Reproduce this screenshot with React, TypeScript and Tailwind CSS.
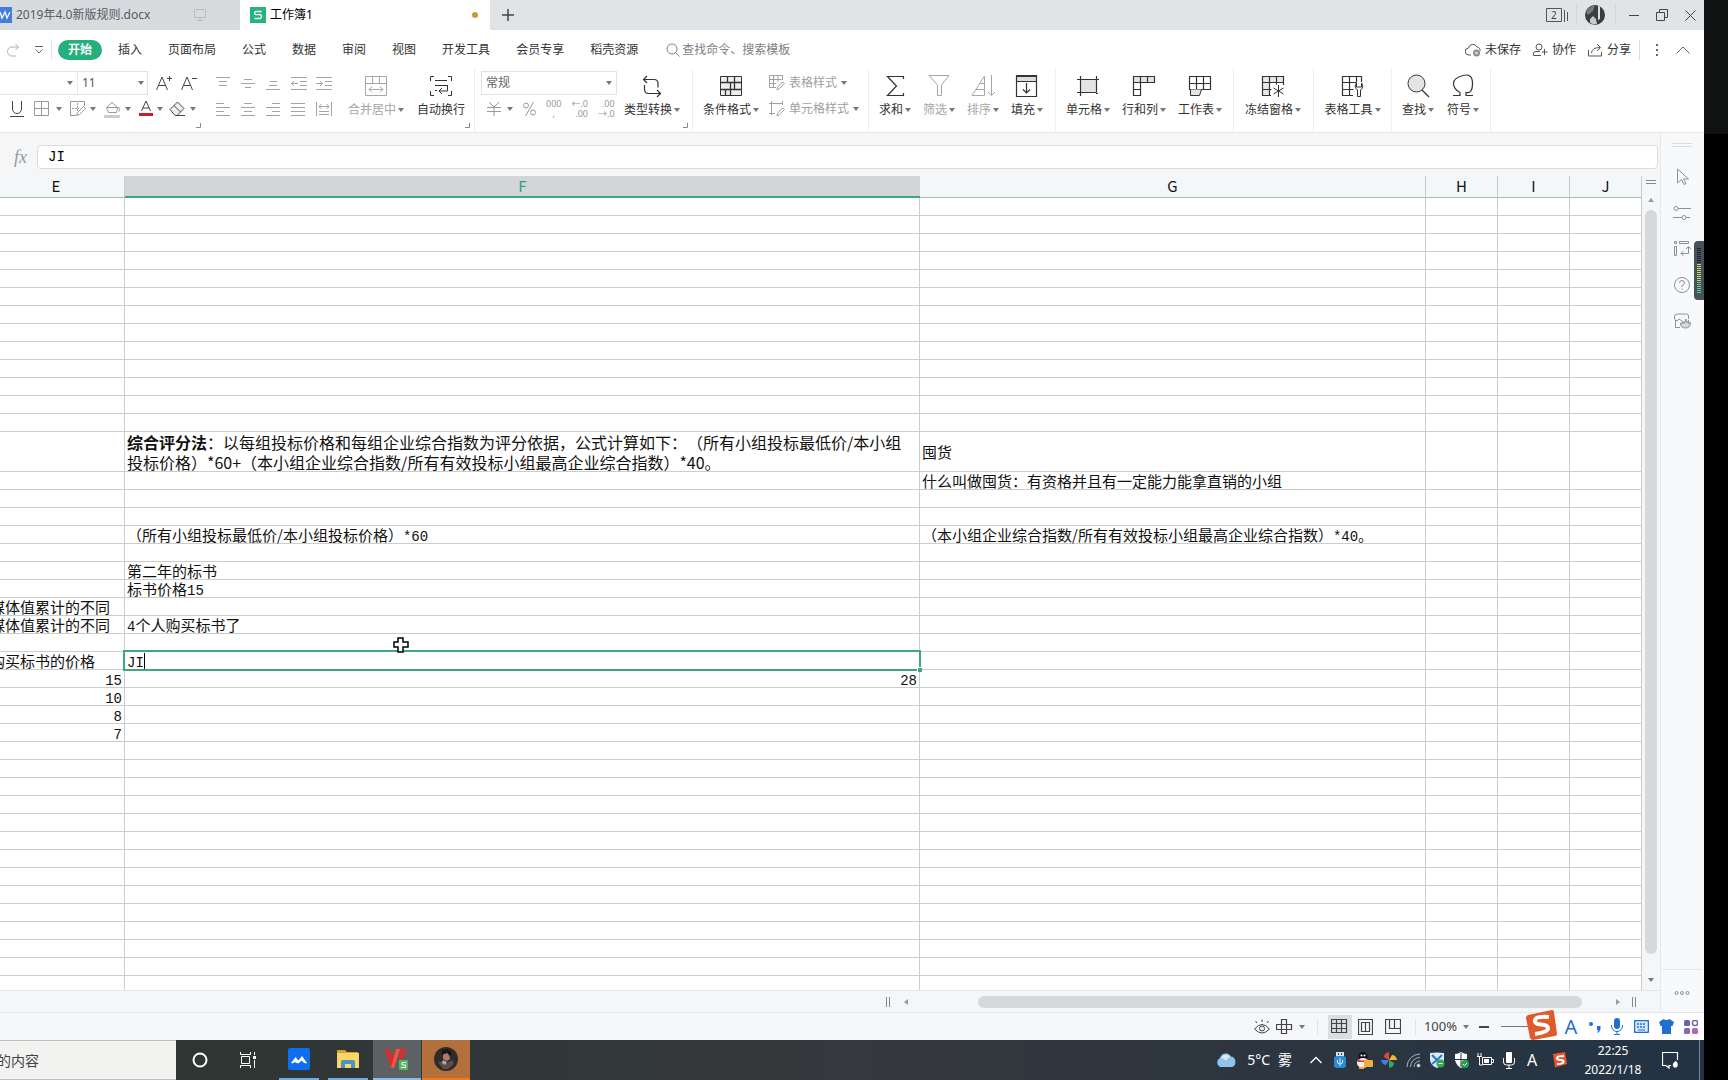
import React from "react";

const UI = "font-['Noto_Sans','Noto_Sans_CJK_SC',sans-serif]";
const CJK = "font-['Noto_Sans_CJK_SC',sans-serif]";
const MONO = "font-['Liberation_Mono','Noto_Sans_CJK_SC',monospace]";

interface IconProps {
    w?: number;
    h?: number;
    className?: string;
    children: React.ReactNode;
}

// Base for all line icons, one unit per pixel
const Icon = ({ w = 20, h = 20, className = "", children }: IconProps) => (
    <svg
        width={w}
        height={h}
        viewBox={`0 0 ${w} ${h}`}
        fill="none"
        stroke="currentColor"
        strokeWidth="1"
        className={`shrink-0 ${className}`}
        aria-hidden="true"
    >
        {children}
    </svg>
);

const Caret = ({ className = "" }: { className?: string }) => (
    <svg width="6" height="4" viewBox="0 0 6 4" className={`shrink-0 fill-[#777] ${className}`} aria-hidden="true">
        <path d="M0 0h6L3 4z" />
    </svg>
);

interface BigButtonProps {
    label: string;
    icon: React.ReactNode;
    width: string;
    caret?: boolean;
    disabled?: boolean;
}

const BigButton = ({ label, icon, width, caret = true, disabled = false }: BigButtonProps) => (
    <button className={`flex flex-col items-center shrink-0 pt-1.5 ${width} ${disabled ? "text-[#a6a6a6]" : "text-[#333]"}`}>
        {icon}
        <span className="flex items-center gap-0.5 text-xs leading-4 mt-1 whitespace-nowrap">
            {label}
            {caret && <Caret />}
        </span>
    </button>
);

const Launcher = () => (
    <Icon w={5} h={5} className="absolute right-1 bottom-1 text-[#888]">
        <path d="M4.500 0v4.500H0" />
    </Icon>
);

const menuItems = ["插入", "页面布局", "公式", "数据", "审阅", "视图", "开发工具", "会员专享", "稻壳资源"];

const TitleBar = () => (
    <div className="flex h-[30px] shrink-0 bg-[#e1e4e7] text-xs text-[#333]">
        <button className="flex items-center w-[240px] bg-[#d9dadd] text-[#555b66]">
            <svg width="12" height="16" viewBox="0 0 12 16" className="shrink-0" aria-hidden="true">
                <path d="M0 0h12v16H0z" fill="#3f7de0" />
                <path d="M0 5l2 6 3-6 2 6 3-6" fill="none" stroke="#fff" strokeWidth="1.300" />
            </svg>
            <span className="ml-1 w-[178px] text-left whitespace-nowrap">2019年4.0新版规则.docx</span>
            <Icon w={12} h={12} className="text-[#bbbdc2]">
                <path d="M.5 .5h11v8H.5zM6 8.500v3M3 11.500h6" />
            </Icon>
        </button>
        <button className="flex items-center w-[250px] bg-white pl-2.5 pr-3 text-black">
            <svg width="16" height="16" viewBox="0 0 16 16" className="shrink-0" aria-hidden="true">
                <path d="M0 0h16v16H0z" fill="#22b57c" />
                <path d="M11.500 4.500H6Q4.500 4.500 4.500 6T6 7.700h4q1.500 0 1.500 1.800T10 11.500H4.500" fill="none" stroke="#fff" strokeWidth="1.300" />
            </svg>
            <span className="ml-1 flex-1 text-left">工作簿1</span>
            <span className="size-1.5 rounded-full bg-[#cb9a3c]" />
        </button>
        <button className="pl-3" aria-label="新建">
            <Icon w={12} h={12} className="text-[#444]">
                <path d="M6 0v12M0 6h12" strokeWidth="1.500" />
            </Icon>
        </button>
        <div className="flex items-center ml-auto pr-0.5">
            <Icon w={22} h={15} className="text-[#555]">
                <path d="M.5 .5h15v13H.5zM18.500 2v12M21.500 4v9" />
                <text x="5" y="11" fontSize="10" fill="#444" stroke="none">2</text>
            </Icon>
            <span className="w-px h-5 bg-[#d2d5d8] mx-2" />
            <svg width="20" height="20" viewBox="0 0 20 20" aria-hidden="true">
                <circle cx="10" cy="10" r="10" fill="#3c3c3f" />
                <path d="M1 7Q4 1 10 .5L8 6l-5 4z" fill="#77787c" />
                <path d="M13 .5v15l2-2V1.500z" fill="#dcdcde" />
                <path d="M5 14l3-3 3 3 1 5-4 .5-3-2z" fill="#c9c9cd" />
            </svg>
            <span className="w-px h-5 bg-[#d2d5d8] ml-2.5 mr-1.5" />
            <button className="flex items-center justify-center w-6 h-5" aria-label="最小化">
                <Icon w={10} h={10} className="text-[#444]"><path d="M0 5.500h10" /></Icon>
            </button>
            <button className="flex items-center justify-center w-8 h-5" aria-label="还原">
                <Icon w={12} h={12} className="text-[#444]"><path d="M.5 3.500h8v8h-8zM3.500 3.500v-3h8v8h-3" /></Icon>
            </button>
            <button className="flex items-center justify-center w-6 h-5" aria-label="关闭">
                <Icon w={11} h={11} className="text-[#444]"><path d="M.5 .5l10 10M10.500 .5l-10 10" /></Icon>
            </button>
        </div>
    </div>
);

const MenuBar = () => (
    <div className="flex items-center h-[38px] shrink-0 bg-white text-xs text-[#333] pt-0.5 pl-1.5 pr-3.5">
        <button aria-label="恢复">
            <Icon w={14} h={14} className="text-[#b0b0b0]">
                <path d="M9.500 1l3 3-3 3M12 4H6a4.500 4.500 0 0 0 0 9h4" />
            </Icon>
        </button>
        <button className="ml-[15px]" aria-label="自定义">
            <Icon w={8} h={8} className="text-[#666]"><path d="M0 .5h8M.5 3.500L4 7l3.500-3.500" /></Icon>
        </button>
        <span className="w-px h-5 bg-[#e4e4e4] ml-2" />
        <button className="ml-1.5 h-5 px-2.5 rounded-full bg-[#24b07c] text-white font-bold">开始</button>
        <nav className="flex gap-[26px] ml-4">
            {menuItems.map((item) => (
                <button key={item} className="whitespace-nowrap">{item}</button>
            ))}
        </nav>
        <label className="flex items-center gap-0.5 ml-7 text-[#7d8088]">
            <Icon w={14} h={14}><circle cx="6" cy="6" r="5" /><path d="M9.500 9.500l4 4" /></Icon>
            <input className="w-[120px] outline-none placeholder:text-[#7d8088]" placeholder="查找命令、搜索模板" aria-label="查找命令" />
        </label>
        <div className="flex items-center ml-auto">
            <button className="flex items-center gap-1">
                <Icon w={16} h={14} className="text-[#555]">
                    <path d="M6 12H4a3.500 3.500 0 0 1-.5-7A4.500 4.500 0 0 1 12 4a3.500 3.500 0 0 1 3 4" />
                    <circle cx="11.500" cy="10" r="3.500" fill="#888" stroke="none" />
                    <path d="M10 8.500l3 3M13 8.500l-3 3" stroke="#fff" />
                </Icon>
                未保存
            </button>
            <button className="flex items-center gap-1 ml-3">
                <Icon w={15} h={14} className="text-[#555]">
                    <circle cx="6" cy="4" r="3" /><path d="M8 12.500H.5v-2q0-2 2.500-2h4M11.500 6v6M9 9h5.500" />
                </Icon>
                协作
            </button>
            <button className="flex items-center gap-1 ml-3">
                <Icon w={15} h={14} className="text-[#555]">
                    <path d="M.5 7v6h13V9M3.500 10Q4 4.500 12 4.500M9 1l3.500 3.500L9 8" />
                </Icon>
                分享
            </button>
            <span className="w-px h-5 bg-[#ddd] ml-2" />
            <button className="ml-4" aria-label="更多">
                <svg width="2" height="12" viewBox="0 0 2 12" className="fill-[#666]" aria-hidden="true">
                    <path d="M0 0h2v2H0zM0 5h2v2H0zM0 10h2v2H0z" />
                </svg>
            </button>
            <button className="ml-[18px]" aria-label="收起">
                <Icon w={14} h={8} className="text-[#666]"><path d="M.5 7.500L7 1l6.500 6.500" /></Icon>
            </button>
        </div>
    </div>
);

const alignIcons: [string, string][] = [
    ["顶端对齐", "M0 1.500h14M3 5.500h8M3 9.500h8"],
    ["垂直居中", "M3 3.500h8M0 7.500h14M4 11.500h6"],
    ["底端对齐", "M4 5.500h7M3 9.500h8M0 13.500h14"],
    ["减少缩进", "M0 1.500h16M9 5.500h7M9 9.500h7M0 13.500h16M0 7.500h7M3 5l-2.500 2.500L3 10"],
    ["增加缩进", "M0 1.500h16M9 5.500h7M9 9.500h7M0 13.500h16M0 7.500h6M4 5l2.500 2.500L4 10"],
    ["左对齐", "M0 1.500h8M0 5.500h14M0 9.500h8M0 13.500h14"],
    ["居中", "M3 1.500h8M0 5.500h14M3 9.500h8M0 13.500h14"],
    ["右对齐", "M6 1.500h8M0 5.500h14M6 9.500h8M0 13.500h14"],
    ["两端对齐", "M0 1.500h14M0 5.500h14M0 9.500h14M0 13.500h14"],
    ["分散对齐", "M.5 0v14M15.500 0v14M3 4.500h10M5.500 2L3 4.500 5.500 7M10.500 2L13 4.500 10.500 7M3 9.500h10M3 12.500h10"],
];

const Ribbon = () => (
    <div className="flex h-16 shrink-0 bg-white text-xs">
        <div className="relative flex flex-col w-[205px] shrink-0 pt-0.5">
            <div className="flex items-center h-[26px] text-[#555]">
                <div className="flex items-center h-6 w-[148px] border border-l-0 border-[#e2e2e2]">
                    <button className="flex items-center justify-end w-[78px] h-full pr-1 border-r border-[#e8e8e8]" aria-label="字体"><Caret /></button>
                    <button className="flex items-center justify-between flex-1 pl-1 pr-[3px]">11<Caret /></button>
                </div>
                <button className="ml-2" aria-label="增大字号">
                    <Icon w={17} h={16} className="text-[#444]"><path d="M.5 15L6 2l5.500 13M2.500 10.500h7M11 3.500h5M13.500 1v5" /></Icon>
                </button>
                <button className="ml-2" aria-label="减小字号">
                    <Icon w={17} h={16} className="text-[#444]"><path d="M.5 15L6 2l5.500 13M2.500 10.500h7M11 3.500h5" /></Icon>
                </button>
            </div>
            <div className="flex items-center h-[26px] pl-2.5 text-[#999]">
                <button aria-label="下划线">
                    <Icon w={14} h={16} className="text-[#444]"><path d="M2.500 0v8a4.500 4.500 0 0 0 9 0V0M0 15.500h14" /></Icon>
                </button>
                <button className="flex items-center gap-1.5 ml-2.5" aria-label="边框">
                    <Icon w={16} h={16}><path d="M.5 .5h14v14H.5zM7.500 .5v14M.5 7.500h14" /></Icon><Caret />
                </button>
                <button className="flex items-center gap-1 ml-2" aria-label="绘制边框">
                    <Icon w={16} h={16}><path d="M.5 15V.5h14V5M.5 14.500H6M13.500 5.500l2 2-6 6-3 1 1-3z" /><path d="M7.500 2v8M2 7.500h7" strokeDasharray="2 1" /></Icon><Caret />
                </button>
                <button className="flex items-center gap-1 ml-2" aria-label="填充颜色">
                    <Icon w={17} h={17}><path d="M2.500 6.500L8 1.500l5.500 5-1 5h-8zM3 6.500h12q1 2 0 4" /><path d="M0 14h16v3H0z" fill="#ccc" stroke="none" /></Icon><Caret />
                </button>
                <button className="flex items-center gap-1 ml-2" aria-label="字体颜色">
                    <Icon w={14} h={16} className="text-[#444]"><path d="M2.500 10L7 0l4.500 10M4 7h6" /><path d="M0 12h14v3H0z" fill="#c5202b" stroke="none" /></Icon><Caret />
                </button>
                <button className="flex items-center gap-1 ml-1.5" aria-label="清除">
                    <Icon w={17} h={16} className="text-[#444]"><path d="M1 8.500l7.500-7.500 6.500 6.500-7 7H6zM5 4.500l6.500 6.500M6 14.500h10" fill="#eee" /></Icon><Caret />
                </button>
            </div>
            <Launcher />
        </div>
        <div className="relative flex w-[270px] shrink-0 border-r border-[#efefef]">
            <div className="grid grid-cols-5 w-[125px] ml-1.5 mt-0.5 h-[52px] text-[#a3a3a3]">
                {alignIcons.map(([name, d]) => (
                    <button key={name} className="flex items-center justify-center" aria-label={name}>
                        <Icon w={16} h={15}><path d={d} /></Icon>
                    </button>
                ))}
            </div>
            <BigButton label="合并居中" width="w-20" disabled icon={
                <Icon w={24} h={24}><path d="M1.500 2.500h21v19h-21zM1.500 9.500h21M8.500 2.500v7M15.500 2.500v7M5 15.500h14M8 12.500l-3 3 3 3M16 12.500l3 3-3 3" /></Icon>
            } />
            <BigButton label="自动换行" width="w-[50px]" caret={false} icon={
                <Icon w={24} h={24}><path d="M5 2.500H1.500V7M19 2.500h3.500V7M5 21.500H1.500V17M19 21.500h3.500V17M6 6.500h12M6 11.500h12M18.500 11v6H10M13 14l-3 3 3 3M6 16.500h2" /></Icon>
            } />
            <Launcher />
        </div>
        <div className="relative flex w-[218px] shrink-0 border-r border-[#efefef]">
            <div className="w-[136px] ml-1.5 text-[#999]">
                <button className="flex items-center justify-between mt-[3px] w-full h-6 px-1 border border-[#e2e2e2] text-[#666]">
                    常规<Caret />
                </button>
                <div className="flex items-center h-[26px] mt-px gap-2.5 pl-1.5">
                    <button className="flex items-center gap-1.5" aria-label="货币">
                        <Icon w={14} h={14}><path d="M2 0l5 5 5-5M0 5.500h14M0 9.500h14M7 5v9" /></Icon><Caret />
                    </button>
                    <button aria-label="百分比">
                        <Icon w={13} h={14}><circle cx="3" cy="3.500" r="2.500" /><circle cx="10" cy="10.500" r="2.500" /><path d="M10.500 0l-8 14" /></Icon>
                    </button>
                    <button className="flex flex-col items-center text-[9px] leading-[10px]" aria-label="千位分隔"><span>000</span><span>,</span></button>
                    <button className="flex flex-col items-end text-[9px] leading-[10px]" aria-label="增加小数"><span>←.0</span><span>.00</span></button>
                    <button className="flex flex-col items-end text-[9px] leading-[10px]" aria-label="减少小数"><span>.00</span><span>→.0</span></button>
                </div>
            </div>
            <BigButton label="类型转换" width="w-[70px]" icon={
                <Icon w={24} h={24}><path d="M4 5.500h10q4 0 4 4v4M7 2L3.500 5.500 7 9M4.500 11v4q0 4.500 4 4.500h12M17 16l3.500 3.500L17 23" strokeWidth="1.200" /></Icon>
            } />
            <Launcher />
        </div>
        <div className="flex w-[176px] shrink-0 border-r border-[#efefef]">
            <BigButton label="条件格式" width="w-[76px]" icon={
                <Icon w={24} h={24}><path d="M1.500 2.500h21v19h-21z" fill="#eee" /><path d="M1.500 8.500h21M1.500 15.500h21M8.500 2.500v6M15.500 2.500v6M11.500 8.500v7M15.500 8.500v7M6.500 15.500v6M11.500 15.500v6" strokeWidth="1.300" /></Icon>
            } />
            <div className="flex flex-col pt-0.5 text-[#a0a0a0] whitespace-nowrap">
                <button className="flex items-center gap-1 h-[26px]">
                    <Icon w={16} h={16}><path d="M7 12.500H.5V.5h13V5M.5 4.500h12M4.500 .5v12M9 .5v6M.5 8.500H7M14 7l1.500 1.500-5 5L8 15l.5-3z" /></Icon>
                    表格样式<Caret />
                </button>
                <button className="flex items-center gap-1 h-[26px]">
                    <Icon w={16} h={16}><path d="M2.500 0v14M0 2.500h14M13.500 0v4M0 12.500h6M14 7l1.500 1.500-5 5L8 15l.5-3z" /></Icon>
                    单元格样式<Caret />
                </button>
            </div>
        </div>
        <div className="flex w-[187px] shrink-0 pl-1 border-r border-[#efefef]">
            <BigButton label="求和" width="w-11" icon={
                <Icon w={24} h={24}><path d="M20.500 5V2.500h-16l9 9.500-9 9.500h16V19" strokeWidth="1.200" /></Icon>
            } />
            <BigButton label="筛选" width="w-11" disabled icon={
                <Icon w={24} h={24}><path d="M2 1.500h20L14.500 11v10.500h-4V11z" /></Icon>
            } />
            <BigButton label="排序" width="w-11" disabled icon={
                <Icon w={24} h={24}><path d="M1 21.500L13.500 2v19.500zM5 15.500h8.500M9 9.500h4M20.500 1v20M17 18l3.500 3.500L24 18" /></Icon>
            } />
            <BigButton label="填充" width="w-11" icon={
                <Icon w={24} h={24}><path d="M1.500 2.500h20v5h-20z" fill="#ddd" /><path d="M1.500 1.500h20v21h-20zM1.500 7.500h20M11.500 9v10M8 15.500l3.500 3.500 3.500-3.500" strokeWidth="1.200" /></Icon>
            } />
        </div>
        <div className="flex w-[178px] shrink-0 pl-1 border-r border-[#efefef]">
            <BigButton label="单元格" width="w-14" icon={
                <Icon w={24} h={24}><path d="M4.500 5.500h16v13h-16z" fill="#e4e4e4" /><path d="M1 5.500h22M1 18.500h18M4.500 2v20M20.500 2v15M20 19.500h2" strokeWidth="1.200" /></Icon>
            } />
            <BigButton label="行和列" width="w-14" icon={
                <Icon w={24} h={24}><path d="M1.500 2.500h21v6h-21z" fill="#e4e4e4" /><path d="M1.500 2.500h21v6h-14v13h-7zM8.500 2.500v6M15.500 2.500v6M1.500 8.500h7M1.500 15.500h7" strokeWidth="1.200" /></Icon>
            } />
            <BigButton label="工作表" width="w-14" icon={
                <Icon w={24} h={24}><path d="M1.500 2.500h21v13h-21zM1.500 9.500h21M8.500 2.500v13M15.500 2.500v13" strokeWidth="1.200" /><path d="M2.500 15.500v6h9l2-6" fill="#e4e4e4" /></Icon>
            } />
        </div>
        <div className="flex w-20 shrink-0 border-r border-[#efefef]">
            <BigButton label="冻结窗格" width="w-[78px]" icon={
                <Icon w={24} h={24}><path d="M1.500 2.500h21v6h-14v13h-7z" fill="#e8e8e8" /><path d="M10 21.500H1.500v-19h21V11M1.500 8.500h21M1.500 15.500h9M8.500 2.500v19M15.500 2.500v8" strokeWidth="1.200" /><path d="M17.500 11v12M12.500 14l10 6M22.500 14l-10 6" /></Icon>
            } />
        </div>
        <div className="flex w-[78px] shrink-0 border-r border-[#efefef]">
            <BigButton label="表格工具" width="w-[77px]" icon={
                <Icon w={24} h={24}><path d="M12 21.500H1.500v-19h19V8M1.500 8.500h14M1.500 15.500h11M8.500 2.500v19M15.500 2.500v6" strokeWidth="1.200" /><path d="M15.500 9q-3 4 1 7v6.500h3V16q4-3 1-7v4h-5z" fill="#fff" /></Icon>
            } />
        </div>
        <div className="flex w-[99px] shrink-0 pl-1 border-r border-[#efefef]">
            <BigButton label="查找" width="w-11" icon={
                <Icon w={24} h={24}><circle cx="10.500" cy="9.500" r="8.500" fill="#e4e4e4" /><path d="M16 16l7 7" strokeWidth="1.300" /></Icon>
            } />
            <BigButton label="符号" width="w-[46px]" icon={
                <Icon w={24} h={24}><path d="M2 21.500h7v-3Q2.500 15 2.500 9.500T12 1.500t9.500 8-6.500 9v3h7" strokeWidth="1.200" /></Icon>
            } />
        </div>
    </div>
);

// Half-width digits and letters inside a cell
const Half = ({ children }: { children: React.ReactNode }) => (
    <span className={`text-sm leading-none ${MONO}`}>{children}</span>
);

interface Row {
    e?: React.ReactNode;
    f?: React.ReactNode;
    g?: React.ReactNode;
    right?: boolean;
    tall?: boolean;
    active?: boolean;
}

const filled: Record<number, Row> = {
    13: {
        tall: true,
        f: (
            <p className="text-base leading-5">
                <b>综合评分法</b>：以每组投标价格和每组企业综合指数为评分依据，公式计算如下：（所有小组投标最低价/本小组
                <br />
                投标价格）*60+（本小组企业综合指数/所有有效投标小组最高企业综合指数）*40。
            </p>
        ),
        g: "囤货",
    },
    14: { g: "什么叫做囤货：有资格并且有一定能力能拿直销的小组" },
    17: {
        f: <>（所有小组投标最低价/本小组投标价格）<Half>*60</Half></>,
        g: <>（本小组企业综合指数/所有有效投标小组最高企业综合指数）<Half>*40</Half>。</>,
    },
    19: { f: "第二年的标书" },
    20: { f: <>标书价格<Half>15</Half></> },
    21: { e: "媒体值累计的不同" },
    22: { e: "媒体值累计的不同", f: <><Half>4</Half>个人购买标书了</> },
    24: { e: "购买标书的价格", f: <Half>JI</Half>, active: true },
    25: { e: <Half>15</Half>, f: <Half>28</Half>, right: true },
    26: { e: <Half>10</Half>, right: true },
    27: { e: <Half>8</Half>, right: true },
    28: { e: <Half>7</Half>, right: true },
};

const rows: Row[] = Array.from({ length: 43 }, (_, i) => filled[i] ?? {});

const cell = "p-0 border-r border-b border-[#c9cdcc]";

interface ContentProps {
    row: Row;
    editing?: boolean;
    children?: React.ReactNode;
}

const Content = ({ row, editing = false, children }: ContentProps) => {
    if (!children) return null;
    return (
        <div className={`flex items-center px-0.5 whitespace-nowrap ${row.tall ? "h-[39px]" : "h-[17px]"} ${row.right ? "justify-end" : ""}`}>
            <div>{children}</div>
            {editing && <span className="w-px h-4 bg-black" />}
        </div>
    );
};

const Sheet = () => (
    <div className="relative flex-1 min-w-0 overflow-hidden">
        <div className="-ml-3">
            <table className={`w-full table-fixed border-separate border-spacing-0 bg-white text-[15px] leading-[17px] text-[#111] [text-spacing-trim:space-all] ${CJK}`}>
                <colgroup>
                    <col className="w-[137px]" />
                    <col />
                    <col className="w-[506px]" />
                    <col className="w-[72px]" />
                    <col className="w-[72px]" />
                    <col className="w-[72px]" />
                </colgroup>
                <thead>
                    <tr className="h-[22px] bg-[#f4f7f9]">
                        {["E", "F", "G", "H", "I", "J"].map((name) => (
                            <th
                                key={name}
                                scope="col"
                                className={
                                    name === "F"
                                        ? "p-0 pb-px font-normal bg-[#d3d6d9] text-[#2f9f78] border-b-2 border-[#3fa67f]"
                                        : "p-0 pb-0.5 font-normal border-r border-b border-r-[#c9cdcc] border-b-[#a9b8b4]"
                                }
                            >
                                {name}
                            </th>
                        ))}
                    </tr>
                </thead>
                <tbody>
                    {rows.map((row, i) => (
                        <tr key={i} className={row.tall ? "h-10" : "h-[18px]"}>
                            <td className={cell}><Content row={row}>{row.e}</Content></td>
                            <td className={`${cell} ${row.active ? "relative" : ""}`}>
                                <Content row={row} editing={row.active}>{row.f}</Content>
                                {row.active && (
                                    <>
                                        <span className="absolute -inset-0.5 border-2 border-[#3fa67f]" />
                                        <span className="absolute -right-[3px] -bottom-[3px] size-[5px] bg-[#3fa67f] border-t border-l border-white" />
                                    </>
                                )}
                            </td>
                            <td className={cell}><Content row={row}>{row.g}</Content></td>
                            <td className={cell} />
                            <td className={cell} />
                            <td className={cell} />
                        </tr>
                    ))}
                </tbody>
            </table>
        </div>
        {/* mouse pointer */}
        <svg width="16" height="16" viewBox="0 0 16 16" className="absolute left-[393px] top-[461px]" aria-hidden="true">
            <path d="M5 1h5v4h5v5h-5v5H5v-5H1V5h4z" fill="#fff" stroke="#000" strokeWidth="1.500" />
        </svg>
    </div>
);

const SidePanel = () => (
    <aside className="relative flex flex-col items-center w-11 shrink-0 pr-0.5 bg-[#f8f9fb] border-l border-[#e6e8ea] text-[#8d9096]">
        <Icon w={20} h={4} className="mt-2.5 text-[#dadcdf]"><path d="M0 .5h20M0 3.500h20" /></Icon>
        <div className="flex flex-col items-center gap-4 mt-5">
            <button aria-label="选择"><Icon><path d="M5.500 2v14l4-3.500 2.500 5 2-1-2.500-4.500h5z" /></Icon></button>
            <button aria-label="属性"><Icon><circle cx="4" cy="5.500" r="2" /><path d="M6 5.500h13M1 14.500h9M14 14.500h4" /><circle cx="12" cy="14.500" r="2" /></Icon></button>
            <button aria-label="分析"><Icon><path d="M2.500 2.500h2v2h-2zM7.500 2.500h9v2h-9zM2.500 7.500h2v9h-2zM9 14.500h7.500V8M11.500 12L9 14.500l2.500 2.500M14 10l2.500-2.500L19 10" /></Icon></button>
            <button aria-label="帮助"><Icon><circle cx="10" cy="10" r="7.500" /><path d="M7.500 8q0-2.500 2.500-2.500T12.500 8Q12.500 9.500 10 10.500V12M10 13.500v1.500" /></Icon></button>
            <button aria-label="素材"><Icon><path d="M8 16.500H3.500V9M16.500 8V5q0-2-2-2h-9q-3 0-3 3v2l2.500 2 2-2 3 2" /><path d="M8.500 12l1.500 1 .5-3 1.500 2.500L14 8l.5 4 2-2.500v3l2-1q0 5.500-5 5.500t-5-5z" fill="#d6d8dc" /></Icon></button>
        </div>
        <div className="mt-auto w-full pt-5 pb-4 border-t border-[#e4e6e9] flex justify-center">
            <button aria-label="更多工具"><Icon w={16} h={6}><circle cx="2.500" cy="3" r="1.500" /><circle cx="8" cy="3" r="1.500" /><circle cx="13.500" cy="3" r="1.500" /></Icon></button>
        </div>
        {/* floating volume meter */}
        <div className="absolute right-0 top-[108px] w-2.5 h-[59px] rounded-l bg-[#46525a] flex justify-center pt-[7px]">
            <div className="flex flex-col gap-px">
                {Array.from({ length: 23 }, (_, i) => (
                    <span key={i} className={`w-1 h-px ${i < 8 ? "bg-[#20262e]" : i < 17 ? "bg-[#cbd56a]" : "bg-[#63c9a0]"}`} />
                ))}
            </div>
        </div>
    </aside>
);

const StatusBar = () => (
    <div className="relative flex items-center justify-end h-7 shrink-0 bg-[#f5f7fa] border-t border-[#e2e6e8] text-[#444]">
        <button aria-label="护眼模式">
            <Icon w={16} h={16}><path d="M.5 10Q8 1 15.500 10 8 18 .5 10zM8 3V.5M3 4L1.500 2M13 4l1.500-2" /><circle cx="8" cy="9.500" r="2.500" /></Icon>
        </button>
        <button className="flex items-center gap-1.5 ml-1.5" aria-label="阅读模式">
            <Icon w={17} h={17}><path d="M5.500 1.500h5v14h-5zM.5 6.500h15v5H.5z" strokeWidth="1.200" /></Icon><Caret />
        </button>
        <span className="w-px h-4 bg-[#e3e5e8] ml-3 mr-2.5" />
        <button className="flex items-center justify-center w-6 h-6 bg-[#dadde2]" aria-label="普通视图">
            <Icon w={17} h={15}><path d="M.5 .5h15v13H.5zM5.500 .5v13M10.500 .5v13M.5 4.500h15M.5 9.500h15" strokeWidth="1.200" /></Icon>
        </button>
        <button className="ml-1.5" aria-label="页面布局"><Icon w={15} h={16}><path d="M.5 .5h14v15H.5zM3.500 3.500h4v9h-4zM7.500 3.500h4v9h-4z" strokeWidth="1.200" /></Icon></button>
        <button className="ml-3" aria-label="分页预览"><Icon w={16} h={15}><path d="M.5 .5h15v14H.5zM4.500 .5v9h11M9.500 .5v9" strokeWidth="1.200" /></Icon></button>
        <span className="w-px h-4 bg-[#e3e5e8] ml-3.5 mr-2" />
        <button className="flex items-center gap-1.5 text-[13px]">100%<Caret /></button>
        <button className="ml-2.5 mr-3" aria-label="缩小"><Icon w={10} h={4}><path d="M0 2h10" strokeWidth="2" /></Icon></button>
        <span className="w-8 h-px bg-[#777]" />
        {/* input method toolbar, floats over the bar */}
        <div className="relative flex items-center justify-between w-[171px] h-full pl-[30px] pr-1.5 bg-white text-[#1e6fd0]">
            <svg width="32" height="32" viewBox="0 0 32 32" className="absolute -left-2 -top-1" aria-hidden="true">
                <path d="M3 6L27 1q2 0 2 2l3 22q0 2-2 2L8 31q-2 0-3-2L1 9q0-2 2-3z" fill="#e2592c" />
                <path d="M24 8Q11 7 10 11t6 4.500 7 4T10 25" fill="none" stroke="#fff" strokeWidth="4" />
            </svg>
            <span className="text-xl leading-6 w-4 text-center">A</span>
            <svg width="12" height="12" viewBox="0 0 12 12" className="fill-current" aria-hidden="true"><circle cx="2" cy="3" r="2" /><path d="M8 5h3.500v3Q11 11 8 12l1.500-3H8z" /></svg>
            <svg width="12" height="17" viewBox="0 0 12 17" className="fill-current" aria-hidden="true"><rect x="3" width="6" height="11" rx="3" /><path d="M.5 7v1a5.500 5.500 0 0 0 11 0V7M6 13v3M3 16.500h6" fill="none" stroke="currentColor" /></svg>
            <svg width="15" height="13" viewBox="0 0 15 13" aria-hidden="true"><rect x=".5" y=".5" width="14" height="12" rx="1.500" fill="#d8e8fa" stroke="#1e6fd0" strokeWidth="1.500" /><path d="M3 4h9M3 7h9" stroke="#1e6fd0" strokeWidth="1.500" strokeDasharray="2 1" /><path d="M4 10h7" stroke="#1e6fd0" /></svg>
            <svg width="15" height="15" viewBox="0 0 15 15" className="fill-current" aria-hidden="true"><path d="M4.500 0q3 2 6 0L15 3l-1.500 4H12v8H3V7H1.500L0 3z" /></svg>
            <svg width="14" height="14" viewBox="0 0 14 14" aria-hidden="true"><rect width="6" height="6" rx="1.500" fill="#6a64b0" /><rect x="8.500" y=".5" width="5" height="5" rx="2" fill="none" stroke="#6a64b0" strokeWidth="1.500" /><rect y="8" width="6" height="6" rx="1.500" fill="#8a63b5" /><rect x="8" y="8" width="6" height="6" rx="1.500" fill="#b06ab8" /></svg>
        </div>
    </div>
);

const TaskBar = () => (
    <div className="flex h-10 shrink-0 text-white bg-linear-to-r from-[#2c3632] via-[#35383c] via-50% to-[#233344]">
        <div className="w-[176px] shrink-0 bg-[#f2f2f1] border-y border-[#bdbdbd] overflow-hidden">
            <input className="-ml-[3px] w-full h-full text-sm outline-none placeholder:text-[#444]" placeholder="的内容" aria-label="搜索" />
        </div>
        <button className="flex items-center justify-center w-12" aria-label="Cortana">
            <Icon w={16} h={16}><circle cx="8" cy="8" r="6.500" strokeWidth="2" /></Icon>
        </button>
        <button className="flex items-center justify-center w-12" aria-label="任务视图">
            <Icon w={17} h={16}><path d="M.5 0v2.500h10V0M.5 16v-2.500h10V16M1.500 4.500h8v7h-8zM14.500 0v3M14.500 8v8" /><path d="M13 4h3v3h-3z" fill="#fff" stroke="none" /></Icon>
        </button>
        <button className="flex items-center justify-center w-10 ml-[7px] mr-[9px] border-b-2 border-[#76a9dc]" aria-label="腾讯会议">
            <svg width="22" height="22" viewBox="0 0 22 22" aria-hidden="true">
                <rect width="22" height="22" rx="2" fill="#0f6ef0" />
                <path d="M3 15l4.500-6 3 3.500L14 8l5 7q-2 1-4-1l-1.500-1.500L11 15q-2 1-4-1-2 2-4 1z" fill="#fff" />
            </svg>
        </button>
        <button className="flex items-center justify-center w-10 border-b-2 border-[#76a9dc]" aria-label="文件资源管理器">
            <svg width="22" height="20" viewBox="0 0 22 20" aria-hidden="true">
                <path d="M0 1h8l2 2h11v3H0z" fill="#d9a22e" />
                <path d="M0 4h22v15H0z" fill="#fbd667" />
                <path d="M4 19v-6q0-2 2-2h10q2 0 2 2v6h-4v-4H8v4z" fill="#4a94c9" />
            </svg>
        </button>
        <button className="flex items-center justify-center w-12 ml-[5px] bg-[#5c6165] border-b-2 border-[#8dbbe8]" aria-label="WPS">
            <svg width="24" height="22" viewBox="0 0 24 22" aria-hidden="true">
                <path d="M0 1h5l2 9 4-9h4L9 20H6zM13 1h9l-6 13-2-5 3-4h-4z" fill="#e02a2c" />
                <path d="M11 1h4L9 20H6z" fill="#f2573f" />
                <rect x="14" y="12" width="9" height="10" rx="1" fill="#4fb95a" />
                <path d="M21 14.500h-4v2.500h3.500v2.500H16" fill="none" stroke="#fff" />
            </svg>
        </button>
        <button className="flex items-center justify-center w-12 ml-px bg-[#b2703c] border-b-2 border-[#ef7a1d]" aria-label="聊天">
            <svg width="24" height="24" viewBox="0 0 24 24" aria-hidden="true">
                <circle cx="12" cy="12" r="12" fill="#2f2b2b" />
                <path d="M9 6q4-2 6 1l1 5-3 2-4-2z" fill="#b07a6a" />
                <path d="M4 15l6-1 3 2 5-3 2 4-6 5H9z" fill="#5a4f4d" />
                <path d="M8 3l6-1 4 4-2 3-3-3-5 2z" fill="#1a1616" />
                <path d="M9 13l4 2-2 3-3-2z" fill="#c2a096" />
            </svg>
        </button>
        <div className="flex items-center ml-auto">
            <svg width="22" height="16" viewBox="0 0 22 16" aria-hidden="true">
                <path d="M5 15a5 5 0 0 1 0-9A6 6 0 0 1 16 4.500 5.500 5.500 0 0 1 17 15z" fill="#8fc3ea" />
                <path d="M6 6a5 5 0 0 1 9-1q-3 1-4 4-2-3-5-3z" fill="#dbe9f5" />
            </svg>
            <span className="ml-2.5 text-sm">5°C</span>
            <span className="ml-2 text-sm">雾</span>
            <button className="ml-[18px]" aria-label="显示隐藏的图标"><Icon w={12} h={8}><path d="M.5 7L6 1.500 11.500 7" strokeWidth="1.300" /></Icon></button>
            <div className="flex items-center gap-2 ml-2.5">
                <svg width="16" height="16" viewBox="0 0 16 16" aria-hidden="true"><path d="M4 0h8v5H4z" fill="#cfe4f2" /><path d="M6 1h1v2H6zM9 1h1v2H9z" fill="#345" /><rect x="2" y="4" width="12" height="12" rx="3" fill="#2c8bd0" /><path d="M8 6v8M5.500 8v3L8 12l2.500-1V8" fill="none" stroke="#cfe9fb" /></svg>
                <svg width="17" height="17" viewBox="0 0 17 17" aria-hidden="true"><ellipse cx="7" cy="5" rx="4.500" ry="5" fill="#111" /><ellipse cx="7" cy="11" rx="6" ry="5" fill="#eee" /><path d="M2 7q5 3 10 0v3H2z" fill="#e23b2e" /><circle cx="5.500" cy="3.500" r="1" fill="#fff" /><circle cx="8.500" cy="3.500" r="1" fill="#fff" /><rect x="8" y="8" width="9" height="7" rx="1" fill="#f4a938" /><path d="M3 16h5" stroke="#f4a938" strokeWidth="2" /></svg>
                <svg width="16" height="16" viewBox="0 0 16 16" aria-hidden="true"><path d="M8 8V0q-5 1-5 5l5 3z" fill="#e0453a" /><path d="M8 8h8q-1-5-5-5z" fill="#f0b72f" /><path d="M8 8v8q5-1 5-5z" fill="#3fa654" /><path d="M8 8H0q1 5 5 5z" fill="#3b7de0" /></svg>
                <Icon w={16} h={16} className="text-[#aab2ba]"><path d="M2 15A13 13 0 0 1 15 2M5.500 15A9.500 9.500 0 0 1 15 5.500M9 15a6 6 0 0 1 6-6" /><circle cx="13.500" cy="13.500" r="1.500" fill="#fff" /></Icon>
                <svg width="16" height="16" viewBox="0 0 16 16" aria-hidden="true"><path d="M1 1q7-1 14 0v7q-1 6-7 8-6-2-7-8z" fill="#d9ebfb" /><path d="M3 3l5 5 5-5M3 12l5-4" fill="none" stroke="#2a77cf" strokeWidth="2" /><circle cx="11.500" cy="11.500" r="4" fill="#35a852" /><path d="M9.500 11.500h4" stroke="#fff" /></svg>
                <svg width="16" height="16" viewBox="0 0 16 16" aria-hidden="true"><path d="M8 0q3 2 6 2v6q-1 5-6 8-5-3-6-8V2q3 0 6-2z" fill="#fff" /><path d="M8 1v14M2 7.500h12" stroke="#26323e" /><circle cx="12" cy="12" r="4" fill="#2a9d55" /><path d="M10 12l1.500 1.500L14 11" fill="none" stroke="#fff" /></svg>
                <Icon w={17} h={14}><path d="M5.500 4.500h9v7h-9zM15 6.500h1.500v3H15M0 3.500h5M1 0v3M4 0v3M2.500 4v8h3" /><path d="M7 6h5v4H7z" fill="#fff" stroke="none" /></Icon>
                <Icon w={14} h={17}><rect x="4" y="0" width="6" height="11" rx="1" fill="#fff" stroke="none" /><path d="M1.500 6v4q0 3 3 3h5q3 0 3-3V6M7 13v3.500M4 16.500h6" /></Icon>
                <span className="w-4 text-center text-base">A</span>
            </div>
            <svg width="16" height="16" viewBox="0 0 16 16" className="ml-3" aria-hidden="true">
                <path d="M1 2l12-2 2 12-12 3.500z" fill="#e8572b" />
                <path d="M12 4Q5 4 5 6t3.500 2 3 2T5 12" fill="none" stroke="#fff" strokeWidth="2" />
            </svg>
            <div className="flex flex-col items-center ml-3.5 w-[62px] text-xs leading-[19px]">
                <span>22:25</span>
                <span>2022/1/18</span>
            </div>
            <button className="ml-[18px] mr-5" aria-label="通知">
                <Icon w={17} h={17}><path d="M9 13.500H7v2.500L4 13.500H.5V.5h15V8" strokeWidth="1.200" /><path d="M14 9q-4 2-3 5t4 1q2-3-1-6z" fill="#fff" stroke="none" /></Icon>
            </button>
            <span className="w-px h-10 bg-[#7b8791] mr-1" />
        </div>
    </div>
);

export default function App() {
    return (
        <div className={`flex h-screen overflow-hidden bg-black ${UI}`}>
            <div className="flex flex-col flex-1 min-w-0">
                <TitleBar />
                <MenuBar />
                <Ribbon />
                <div className="flex flex-1 min-h-0 bg-[#f5f6f8] border-t border-[#e6e7e9]">
                    <div className="flex flex-col flex-1 min-w-0">
                        <div className="flex items-center h-[43px] shrink-0 pt-1 pr-0.5">
                            <label htmlFor="formula" className="w-[37px] pl-3.5 text-lg leading-5 italic text-[#999] font-['Liberation_Serif',serif]">fx</label>
                            <input
                                id="formula"
                                defaultValue="JI"
                                className={`flex-1 min-w-0 h-6 px-2.5 bg-white border border-[#d9dbdf] rounded-sm outline-none text-sm text-black ${MONO}`}
                            />
                        </div>
                        <div className="flex flex-1 min-h-0">
                            <Sheet />
                            <div className="flex flex-col items-center w-[18px] shrink-0 pt-1 text-[#888]">
                                <Icon w={10} h={4}><path d="M0 .5h10M0 3.500h10" /></Icon>
                                <svg width="6" height="4" viewBox="0 0 6 4" className="mt-3.5 fill-[#999]" aria-hidden="true"><path d="M0 4h6L3 0z" /></svg>
                                <div className="flex-1 w-3 mt-2 rounded-full bg-[#d6d8dc]" />
                                <Caret className="mt-6 mb-2" />
                            </div>
                        </div>
                        <div className="flex items-center h-[22px] shrink-0 border-t border-[#e3e6e8] pl-[886px] pr-6 text-[#888]">
                            <Icon w={4} h={10}><path d="M.5 0v10M3.500 0v10" /></Icon>
                            <div className="flex items-center flex-1 ml-3.5">
                                <svg width="4" height="6" viewBox="0 0 4 6" className="fill-[#999]" aria-hidden="true"><path d="M4 0v6L0 3z" /></svg>
                                <div className="flex-1 h-3 ml-[70px] mr-[34px] rounded-full bg-[#d6d8dc]" />
                                <svg width="4" height="6" viewBox="0 0 4 6" className="fill-[#999]" aria-hidden="true"><path d="M0 0v6l4-3z" /></svg>
                            </div>
                            <Icon w={4} h={10} className="ml-3"><path d="M.5 0v10M3.500 0v10" /></Icon>
                        </div>
                    </div>
                    <SidePanel />
                </div>
                <StatusBar />
                <TaskBar />
            </div>
            <div className="w-6 shrink-0">
                <div className="h-[134px] bg-[#101211]" />
            </div>
        </div>
    );
}
